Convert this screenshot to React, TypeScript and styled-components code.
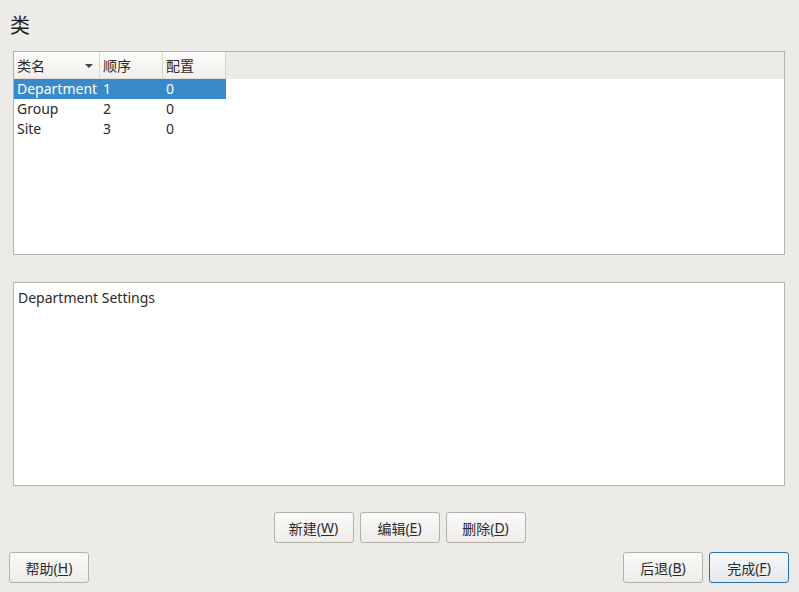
import React from "react";
import styled, { createGlobalStyle } from "styled-components";

const Global = createGlobalStyle`
	html, body {
		margin: 0;
		padding: 0;
		background: #edebe7;
	}
	body {
		font-family: "Noto Sans", "Noto Sans CJK SC", sans-serif;
		font-size: 14px;
		color: #2e3436;
	}
`;

const Window = styled.div`
	width: 799px;
	height: 592px;
	box-sizing: border-box;
	display: flex;
	flex-direction: column;
	background: #edebe7;
	overflow: hidden;
`;

const Title = styled.div`
	font-size: 20px;
	line-height: 26px;
	padding: 13px 0 0 10px;
	height: 51px;
	box-sizing: border-box;
	color: #1e1e1e;
	flex-shrink: 0;
`;

const Panel = styled.div`
	margin: 0 14px 0 13px;
	height: 204px;
	box-sizing: border-box;
	border: 1px solid #b6b2ad;
	background: #ffffff;
	display: flex;
	flex-direction: column;
	flex-shrink: 0;
`;

const HeaderRow = styled.div`
	display: flex;
	height: 27px;
	background: #edebe7;
	flex-shrink: 0;
`;

const HeaderCell = styled.div<{ $w: number }>`
	width: ${(p) => p.$w}px;
	box-sizing: border-box;
	display: flex;
	align-items: center;
	justify-content: space-between;
	padding: 0 6px 0 3px;
	background: linear-gradient(#fcfcfb, #f1efed);
	border-right: 1px solid #d9d5d0;
	border-bottom: 1px solid #e0ddd9;
	color: #2a2a2a;
	line-height: 27px;
`;

const SortArrow = styled.span`
	width: 0;
	height: 0;
	border-left: 4px solid transparent;
	border-right: 4px solid transparent;
	border-top: 4px solid #444;
	margin-top: 1px;
`;

const Row = styled.div<{ $selected?: boolean }>`
	display: flex;
	height: 20px;
	width: 212px;
	background: ${(p) => (p.$selected ? "#3a89c9" : "transparent")};
	color: ${(p) => (p.$selected ? "#ffffff" : "#2a2a2a")};
`;

const Cell = styled.div<{ $w: number }>`
	width: ${(p) => p.$w}px;
	box-sizing: border-box;
	padding-left: 3px;
	line-height: 20px;
	white-space: nowrap;
	overflow: hidden;
`;

const SettingsPanel = styled(Panel)`
	margin-top: 27px;
	padding: 5px 4px;
	line-height: 20px;
	color: #2a2a2a;
`;

const ActionRow = styled.div`
	display: flex;
	justify-content: center;
	gap: 6px;
	margin-top: 26px;
`;

const BottomRow = styled.div`
	display: flex;
	justify-content: space-between;
	margin-top: 9px;
	padding: 0 10px 0 9px;
`;

const Group = styled.div`
	display: flex;
	gap: 6px;
`;

const Button = styled.button<{ $default?: boolean }>`
	width: 80px;
	height: 31px;
	box-sizing: border-box;
	border-radius: 3px;
	border: 1px solid ${(p) => (p.$default ? "#2f6fa6" : "#b4b0aa")};
	background: ${(p) =>
		p.$default
			? "linear-gradient(#f6f8fa, #e4e9ee)"
			: "linear-gradient(#fafafa, #eeecea)"};
	font-family: "Noto Sans", "Noto Sans CJK SC", sans-serif;
	font-size: 14px;
	color: #2a2a2a;
	padding: 0;
	display: flex;
	align-items: center;
	justify-content: center;
`;

const U = styled.span`
	text-decoration: underline;
	text-underline-offset: 2px;
`;

const cols = [86, 63, 63];

const rows = [
	["Department", "1", "0"],
	["Group", "2", "0"],
	["Site", "3", "0"],
];

const Btn = ({ label, k, def }: { label: string; k: string; def?: boolean }) => (
	<Button $default={def}>
		{label}(<U>{k}</U>)
	</Button>
);

export default function App() {
	return (
		<Window>
			<Global />
			<Title>类</Title>
			<Panel>
				<HeaderRow>
					<HeaderCell $w={cols[0]}>
						类名
						<SortArrow />
					</HeaderCell>
					<HeaderCell $w={cols[1]}>顺序</HeaderCell>
					<HeaderCell $w={cols[2]}>配置</HeaderCell>
				</HeaderRow>
				{rows.map((r, i) => (
					<Row key={r[0]} $selected={i === 0}>
						{r.map((c, j) => (
							<Cell key={j} $w={cols[j]}>
								{c}
							</Cell>
						))}
					</Row>
				))}
			</Panel>
			<SettingsPanel>Department Settings</SettingsPanel>
			<ActionRow>
				<Btn label="新建" k="W" />
				<Btn label="编辑" k="E" />
				<Btn label="删除" k="D" />
			</ActionRow>
			<BottomRow>
				<Btn label="帮助" k="H" />
				<Group>
					<Btn label="后退" k="B" />
					<Btn label="完成" k="F" def />
				</Group>
			</BottomRow>
		</Window>
	);
}
